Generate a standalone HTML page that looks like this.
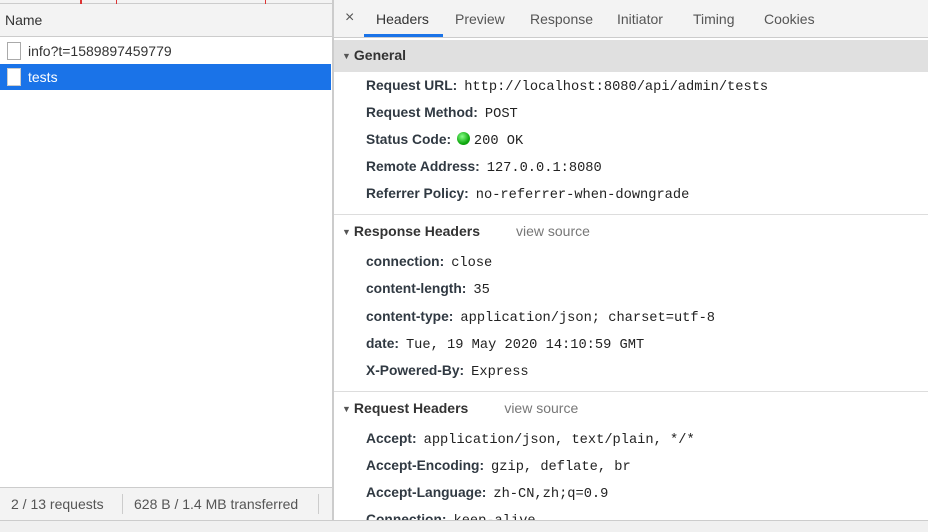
<!DOCTYPE html>
<html><head><style>
*{margin:0;padding:0;box-sizing:border-box}
body{width:928px;height:532px;overflow:hidden;background:#fff;font-family:"Liberation Sans",sans-serif;position:relative;color:#333}
.a{position:absolute;white-space:nowrap}
.l{font-weight:bold;font-size:13.8px;color:#303942}
.m{font-family:"Liberation Mono",monospace;font-size:13.7px;color:#222;font-weight:normal;margin-left:4px}
.row{position:absolute;left:366px;white-space:nowrap}
.sec{position:absolute;left:342px;font-weight:bold;font-size:14px;color:#333;white-space:nowrap}
.tri{font-size:9px;color:#555;margin-right:3px;vertical-align:1px}
.vs{font-weight:normal;color:#777;font-size:14px;margin-left:36px}
</style></head><body>
<div class="a" style="left:0;top:0;width:332px;height:4px;background:#f3f3f3;border-bottom:1px solid #ccc"></div>
<div class="a" style="left:80px;top:0;width:2px;height:4px;background:#d33"></div>
<div class="a" style="left:116px;top:0;width:1px;height:4px;background:#d33"></div>
<div class="a" style="left:265px;top:0;width:1px;height:4px;background:#d33"></div>
<div class="a" style="left:0;top:4px;width:332px;height:33px;background:#f3f3f3;border-bottom:1px solid #ccc"></div>
<div class="a" style="left:5px;top:12px;font-size:14px;color:#333">Name</div>
<div class="a" style="left:7px;top:42px;width:14px;height:18px;border:1px solid #aaa;background:#fff"></div>
<div class="a" style="left:28px;top:43px;font-size:14px;color:#333">info?t=1589897459779</div>
<div class="a" style="left:0;top:64px;width:331px;height:26px;background:#1a73e8"></div>
<div class="a" style="left:7px;top:68px;width:14px;height:18px;border:1px solid #ccc;background:#fff"></div>
<div class="a" style="left:28px;top:69px;font-size:14px;color:#fff">tests</div>
<div class="a" style="left:0;top:487px;width:332px;height:33px;background:#f3f3f3;border-top:1px solid #ccc"></div>
<div class="a" style="left:11px;top:496px;font-size:14px;color:#555">2 / 13 requests</div>
<div class="a" style="left:122px;top:494px;width:1px;height:20px;background:#ccc"></div>
<div class="a" style="left:134px;top:496px;font-size:14px;color:#555">628 B / 1.4 MB transferred</div>
<div class="a" style="left:318px;top:494px;width:1px;height:20px;background:#ccc"></div>
<div class="a" style="left:332px;top:0;width:2px;height:520px;background:#ccc"></div>
<div class="a" style="left:334px;top:0;width:594px;height:38px;background:#f3f3f3;border-bottom:1px solid #ccc"></div>
<div class="a" style="left:345px;top:9px;font-size:16px;color:#555">×</div>
<div class="a" style="left:376px;top:11px;font-size:14px;color:#333">Headers</div>
<div class="a" style="left:364px;top:34px;width:79px;height:3px;background:#1a73e8"></div>
<div class="a" style="left:455px;top:11px;font-size:14px;color:#555">Preview</div>
<div class="a" style="left:530px;top:11px;font-size:14px;color:#555">Response</div>
<div class="a" style="left:617px;top:11px;font-size:14px;color:#555">Initiator</div>
<div class="a" style="left:693px;top:11px;font-size:14px;color:#555">Timing</div>
<div class="a" style="left:764px;top:11px;font-size:14px;color:#555">Cookies</div>
<div class="a" style="left:334px;top:40px;width:594px;height:32px;background:#e0e0e0"></div>
<div class="sec" style="top:47px"><span class="tri">▼</span>General</div>
<div class="row l" style="top:78px">Request URL:<span class="m" style="margin-left:7px">http://localhost:8080/api/admin/tests</span></div>
<div class="row l" style="top:105px">Request Method:<span class="m" style="margin-left:7px">POST</span></div>
<div class="row l" style="top:132px">Status Code: <span style="display:inline-block;width:13px;height:13px;border-radius:50%;background:radial-gradient(circle at 40% 35%,#8f8,#1a1 60%,#080);vertical-align:-1px;margin-left:2px"></span><span class="m">200 OK</span></div>
<div class="row l" style="top:159px">Remote Address:<span class="m" style="margin-left:7px">127.0.0.1:8080</span></div>
<div class="row l" style="top:186px">Referrer Policy:<span class="m" style="margin-left:7px">no-referrer-when-downgrade</span></div>
<div class="a" style="left:334px;top:214px;width:594px;height:1px;background:#ddd"></div>
<div class="sec" style="top:223px"><span class="tri">▼</span>Response Headers<span class="vs">view source</span></div>
<div class="row l" style="top:254px">connection:<span class="m" style="margin-left:7px">close</span></div>
<div class="row l" style="top:281px">content-length:<span class="m" style="margin-left:7px">35</span></div>
<div class="row l" style="top:309px">content-type:<span class="m" style="margin-left:7px">application/json; charset=utf-8</span></div>
<div class="row l" style="top:336px">date:<span class="m" style="margin-left:7px">Tue, 19 May 2020 14:10:59 GMT</span></div>
<div class="row l" style="top:363px">X-Powered-By:<span class="m" style="margin-left:7px">Express</span></div>
<div class="a" style="left:334px;top:391px;width:594px;height:1px;background:#ddd"></div>
<div class="sec" style="top:400px"><span class="tri">▼</span>Request Headers<span class="vs">view source</span></div>
<div class="row l" style="top:431px">Accept:<span class="m" style="margin-left:7px">application/json, text/plain, */*</span></div>
<div class="row l" style="top:458px">Accept-Encoding:<span class="m" style="margin-left:7px">gzip, deflate, br</span></div>
<div class="row l" style="top:485px">Accept-Language:<span class="m" style="margin-left:7px">zh-CN,zh;q=0.9</span></div>
<div class="row l" style="top:512px">Connection:<span class="m" style="margin-left:7px">keep-alive</span></div>
<div class="a" style="left:0;top:520px;width:928px;height:12px;background:#f0f0f0;border-top:1px solid #ccc"></div>
</body></html>
